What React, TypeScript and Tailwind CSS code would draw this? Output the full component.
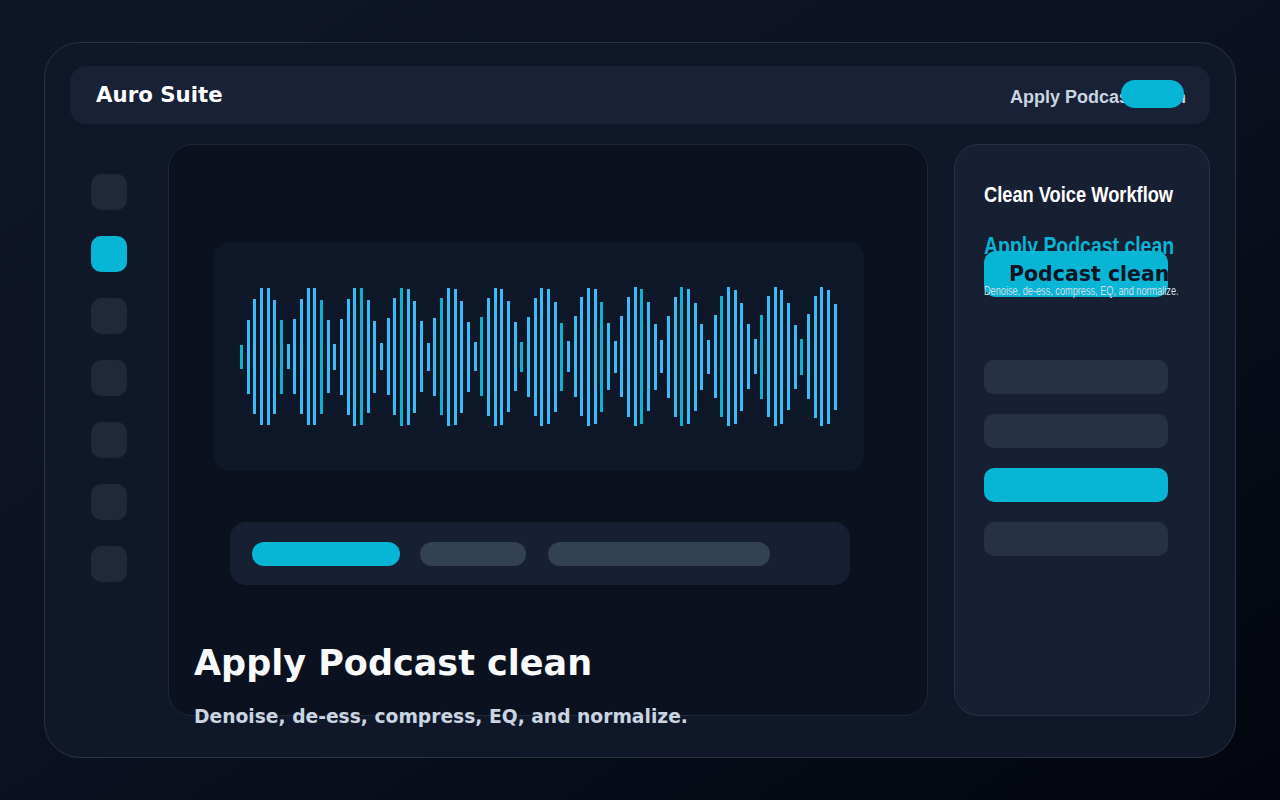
import React from 'react'

const bars = Array.from({ length: 90 }, (_, i) => ({
  h: Math.round(24 + 116 * Math.abs(Math.sin(i * 0.45))),
  accent: i % 6 === 0,
}))

const navItems = [false, true, false, false, false, false, false]
const steps = [false, false, true, false]

function Waveform() {
  return (
    <div className="mx-[45px] flex h-[229px] w-[650px] items-center justify-between rounded-2xl bg-[#0f1829] px-[26px]">
      {bars.map((b, i) => (
        <div
          key={i}
          className={b.accent ? 'w-[3px] bg-[#0eb1cf]' : 'w-[3px] bg-[#38bdf8]'}
          style={{ height: b.h }}
        />
      ))}
    </div>
  )
}

export default function App() {
  return (
    <div className="min-h-screen w-full bg-linear-to-br from-[#0f1626] via-[#0b1120] to-[#03060e] px-[44px] py-[42px] font-['DejaVu_Sans',sans-serif]">
      <div className="h-[716px] w-[1192px] rounded-[36px] border border-[#2a3344] bg-[#0f1729] px-[25px] pt-[23px]">
        {/* top bar */}
        <div className="relative flex h-[58px] items-center justify-between rounded-2xl bg-[#182135] pr-[24px] pl-[26px]">
          <span className="text-[21.3px] leading-none font-bold text-white">Auro Suite</span>
          <span className="mt-[3px] font-['Liberation_Sans',Arial,sans-serif] text-[18px] leading-none font-bold text-[#cbd5e1]">
            Apply Podcast clean
          </span>
          <span className="absolute top-[14px] right-[26px] h-[28px] w-[63px] rounded-full bg-[#06b6d4]" />
        </div>

        <div className="mt-[20px] flex gap-[26px]">
          {/* icon rail */}
          <div className="flex w-[72px] flex-col gap-[26px] pt-[30px] pl-[21px]">
            {navItems.map((active, i) => (
              <div
                key={i}
                className={active ? 'h-9 w-9 rounded-[10px] bg-[#06b6d4]' : 'h-9 w-9 rounded-[10px] bg-[#1f2937]'}
              />
            ))}
          </div>

          {/* editor */}
          <div className="h-[572px] w-[760px] rounded-3xl border border-[#1e2838] bg-[#0b111f] pt-[97px]">
            <Waveform />
            <div className="mt-[51px] ml-[61px] flex h-[63px] w-[620px] items-center rounded-2xl bg-[#172033] pl-[22px]">
              <div className="h-6 w-[148px] rounded-full bg-[#06b6d4]" />
              <div className="ml-[20px] h-6 w-[106px] rounded-full bg-[#334155]" />
              <div className="ml-[22px] h-6 w-[222px] rounded-full bg-[#334155]" />
            </div>
            <h1 className="mt-[61px] ml-[25px] text-[35px] leading-none font-bold text-[#f8fafc]">Apply Podcast clean</h1>
            <p className="mt-[27px] ml-[25px] text-[18.7px] leading-none font-bold text-[#cbd5e1]">
              Denoise, de-ess, compress, EQ, and normalize.
            </p>
          </div>

          {/* workflow panel */}
          <div className="flex h-[572px] w-[256px] flex-col rounded-3xl border border-[#273144] bg-[#172033] pt-[39px] pl-[29px] font-['Liberation_Sans',Arial,sans-serif]">
            <h2 className="origin-left scale-x-[0.83] text-[22px] leading-none font-bold whitespace-nowrap text-white">
              Clean Voice Workflow
            </h2>
            <p className="mt-[29px] origin-left scale-x-[0.845] text-[23px] leading-none font-bold whitespace-nowrap text-[#06b6d4]">
              Apply Podcast clean
            </p>
            <button className="relative -mt-[7px] flex h-[46px] w-[184px] items-center overflow-hidden rounded-xl bg-[#06b6d4] pl-[25px] font-['DejaVu_Sans',sans-serif] text-[20.5px] leading-none font-bold whitespace-nowrap text-[#0b1324]">
              Podcast clean
            </button>
            <p className="relative -mt-[13px] origin-left scale-x-[0.705] text-[13px] leading-none whitespace-nowrap text-[#d5dce6]">
              Denoise, de-ess, compress, EQ, and normalize.
            </p>
            <div className="mt-[63px] flex w-[184px] flex-col gap-5">
              {steps.map((active, i) => (
                <div
                  key={i}
                  className={active ? 'h-[34px] rounded-[10px] bg-[#06b6d4]' : 'h-[34px] rounded-[10px] bg-[#263244]'}
                />
              ))}
            </div>
          </div>
        </div>
      </div>
    </div>
  )
}
